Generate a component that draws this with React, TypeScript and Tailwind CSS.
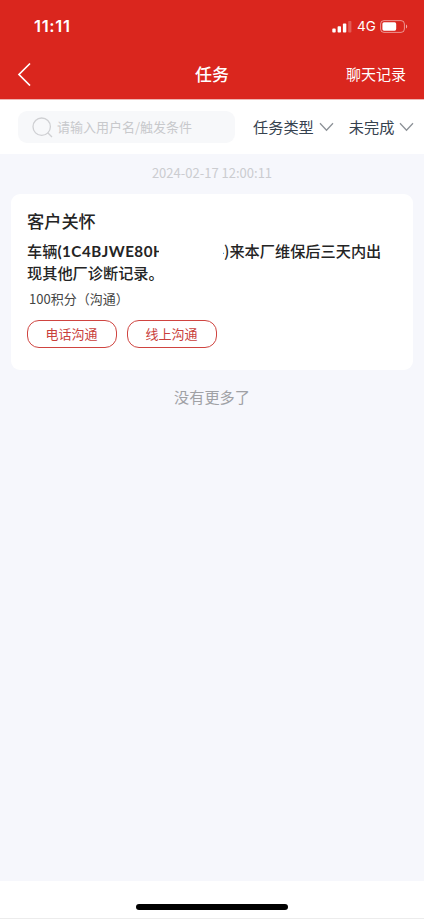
const StatusBar = () => {
    return (
        <div className="flex h-[50px] items-center justify-between pt-[3px] pl-[34px] pr-[16px]">
            <span className="-mt-px font-['Inter'] text-[16.5px] font-semibold leading-5 tracking-[0.7px]">11:11</span>

            <div className="flex items-center">
                <svg className="h-3 w-5" viewBox="0 0 20 12" fill="currentColor">
                    <rect x="0.3" y="7.6" width="3.4" height="4" rx="0.8" />
                    <rect x="5.6" y="5.3" width="3.4" height="6.3" rx="0.8" />
                    <rect x="10.9" y="2.6" width="3.4" height="9" rx="0.8" />
                    <rect x="16.2" y="0" width="3.2" height="11.6" rx="0.8" opacity="0.25" />
                </svg>
                <span className="-mt-px ml-[5px] w-[19px] whitespace-nowrap font-['Inter'] text-[13.5px] leading-5">4G</span>
                <svg className="ml-1 h-[13px] w-7" viewBox="0 0 28 13" fill="none">
                    <rect x="0.6" y="0.6" width="23.8" height="11.8" rx="3.4" stroke="currentColor" opacity="0.5" />
                    <rect x="2.4" y="2.3" width="13.8" height="8.4" rx="1.6" fill="currentColor" />
                    <path d="M26 4.5c1.6.6 1.6 3.4 0 4z" fill="currentColor" opacity="0.6" />
                </svg>
            </div>
        </div>
    )
}

const NavBar = () => {
    return (
        <div className="-mt-px grid h-[49px] grid-cols-3 items-center">
            <svg className="ml-[17px] h-6 w-4" viewBox="0 0 16 24" fill="none" stroke="currentColor" strokeWidth="1.7">
                <path d="M13 1.5L2 12.5l11 11" />
            </svg>
            <h1 className="text-center text-[17px] font-medium leading-6">任务</h1>
            <span className="pr-[18px] text-right text-[15px] leading-6">聊天记录</span>
        </div>
    )
}

const Filter = ({ label }: { label: string }) => {
    return (
        <div className="flex items-center gap-[5px] text-[15.2px] leading-6 text-[#36424f]">
            <span className="-mt-[2px]">{label}</span>
            <svg className="h-[10px] w-[15px]" viewBox="0 0 15 10" fill="none" stroke="#8d9298" strokeWidth="1.3">
                <path d="M1 1.3l6.5 7 6.5-7" />
            </svg>
        </div>
    )
}

const ActionButton = ({ label }: { label: string }) => {
    return (
        <button className="flex h-7 w-[90px] items-center justify-center rounded-[12px] border-[1.3px] border-[#cf4440] pr-px text-[13px] text-[#c9403b]">
            {label}
        </button>
    )
}

const TaskCard = () => {
    return (
        <div className="mx-[11px] h-[176px] rounded-[9px] bg-white px-4 pt-[15px] text-[#242424]">
            <h2 className="text-[17.2px] font-medium leading-6">客户关怀</h2>

            <div className="mt-[7px] text-[15.2px] font-medium leading-[21.5px]">
                {/* the middle of the VIN is hidden */}
                <div className="flex h-[21.5px] whitespace-nowrap">
                    <span>车辆</span>
                    <span className="w-[102px] overflow-hidden pt-px font-['Lato'] font-bold leading-[20.5px] tracking-[0.5px]">(1C4BJWE80H</span>
                    <span className="ml-[64px] flex w-[6px] justify-end overflow-hidden">4)</span>
                    <span>来本厂维保后三天内出</span>
                </div>
                <div>现其他厂诊断记录。</div>
            </div>

            <p className="mt-[6px] pl-[2px] text-[13px] leading-5 text-[#444]">100积分（沟通）</p>

            <div className="mt-[11px] flex gap-[10px]">
                <ActionButton label="电话沟通" />
                <ActionButton label="线上沟通" />
            </div>
        </div>
    )
}

export default function App() {
    return (
        <div className="flex h-[919px] w-[424px] flex-col overflow-hidden bg-[#f6f7fc] font-['Noto_Sans_CJK_SC',sans-serif]">
            <header className="h-[100px] shrink-0 border-b border-[#eeb5b2] bg-[#da261e] text-white">
                <StatusBar />
                <NavBar />
            </header>

            <div className="flex h-[54px] shrink-0 items-center bg-white pl-[18px]">
                <div className="flex h-8 w-[217px] items-center rounded-[9px] bg-[#f7f8fa] pl-[14px] text-[#c8c9cc]">
                    <svg className="h-[21px] w-[21px]" viewBox="0 0 21 21" fill="none" stroke="#cfd0d3" strokeWidth="1.3">
                        <circle cx="9.7" cy="9.7" r="8.7" />
                        <path d="M15.7 15.7l4.3 4.3" />
                    </svg>
                    <span className="ml-1 whitespace-nowrap text-[13px] leading-5">请输入用户名/触发条件</span>
                </div>
                <div className="ml-[18px] flex gap-[15px]">
                    <Filter label="任务类型" />
                    <Filter label="未完成" />
                </div>
            </div>

            <p className="h-10 text-center text-[13px] leading-[38px] text-[#cbccd0]">2024-02-17 12:00:11</p>

            <TaskCard />

            <p className="mt-[14px] text-center text-[15.2px] leading-6 text-[#a0a1a5]">没有更多了</p>

            <footer className="mt-auto h-[38px] shrink-0 border-b border-[#ececec] bg-white pt-[23px]">
                <div className="mx-auto h-[6px] w-[152px] rounded-full bg-black" />
            </footer>
        </div>
    )
}
